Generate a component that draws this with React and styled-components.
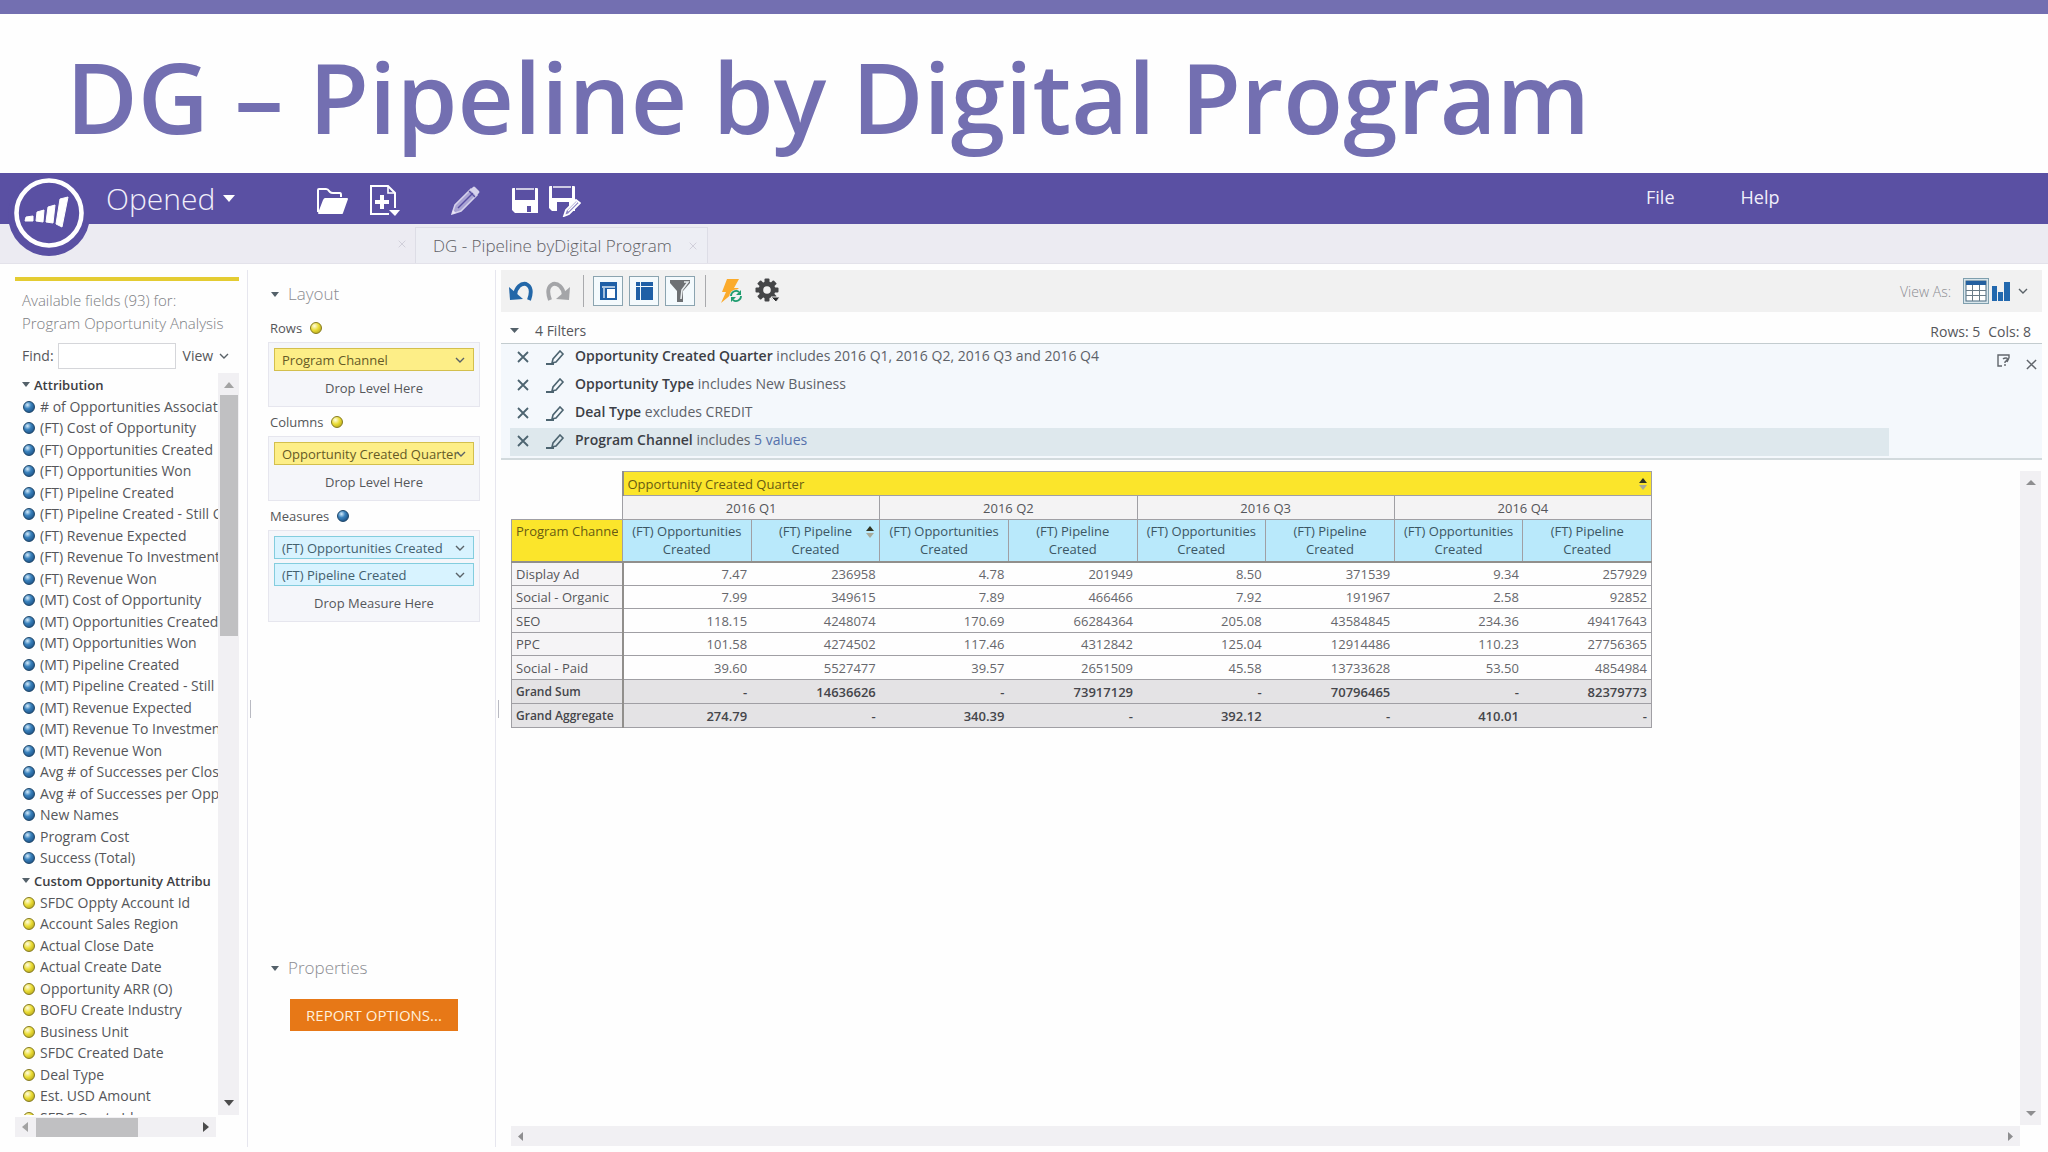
import React from 'react';
import styled, { createGlobalStyle, css } from 'styled-components';

const GlobalStyle = createGlobalStyle`
  *, *::before, *::after { box-sizing: border-box; }
  body {
    margin: 0;
    background: #fefefe;
    color: #55565a;
    font-family: "Open Sans", "Noto Sans", sans-serif;
    font-size: 14px;
  }
  button, input { font: inherit; color: inherit; }
  button { cursor: pointer; }
  ul { list-style: none; margin: 0; padding: 0; }
  h1, h2, h3, p { margin: 0; }
  svg { display: block; flex: none; }
`;

const Page = styled.div`
  display: flex;
  flex-direction: column;
  height: 100vh;
  overflow: hidden;
`;

const SlideTitle = styled.h1`
  flex: none;
  padding: 5px 66px 0;
  border-top: 14px solid #736fb1;
  color: #736fb1;
  font-size: 98px;
  font-weight: 600;
  line-height: 154px;
  white-space: nowrap;
`;

const plainButton = css`
  display: flex;
  align-items: center;
  justify-content: center;
  padding: 0;
  border: 0;
  background: none;
`;

const IconButton = styled.button`
  ${plainButton}
`;

/* ---------- header ---------- */

const Header = styled.header`
  position: relative;
  flex: none;
  display: flex;
  align-items: center;
  height: 51px;
  padding-left: 106px;
  background: #5a50a3;
  color: #f1effa;
`;

const Logo = styled.svg`
  position: absolute;
  left: 8px;
  top: 1px;
`;

const OpenedMenu = styled.button`
  ${plainButton}
  gap: 8px;
  width: 130px;
  justify-content: flex-start;
  font-size: 30px;
  font-weight: 300;
  line-height: 40px;
`;

const HeaderTools = styled.div`
  flex: 1;
  display: flex;
  align-items: center;
  padding: 4px 0 0 80px;
`;

const ToolSlot = styled(IconButton)`
  width: ${(p) => p.$width}px;
  height: 36px;
  justify-content: flex-start;
`;

const HeaderNav = styled.nav`
  display: flex;
  gap: 66px;
  width: 402px;
  padding-bottom: 4px;
`;

const NavLink = styled.a`
  color: inherit;
  font-size: 18px;
  line-height: 24px;
  text-decoration: none;
`;

/* ---------- tabs ---------- */

const TabStrip = styled.nav`
  flex: none;
  display: flex;
  justify-content: flex-start;
  height: 40px;
  padding-left: 398px;
  background: #ecebf2;
  border-bottom: 1px solid #e3e2ea;
`;

const TabClose = styled(IconButton)`
  color: #cfced8;
`;

const Tab = styled.div`
  display: flex;
  align-items: center;
  gap: 17px;
  margin: 3px 0 0 9px;
  padding: 0 10px 0 17px;
  background: #edeef4;
  border: 1px solid #dddde6;
  border-bottom: 0;
`;

const TabLink = styled.a`
  color: #5f6065;
  font-size: 17px;
  font-weight: 300;
  line-height: 24px;
  text-decoration: none;
  white-space: nowrap;
`;

/* ---------- panels ---------- */

const Workspace = styled.main`
  flex: 1;
  min-height: 0;
  display: flex;
  padding: 6px 6px 5px 3px;
`;

const FieldsPanel = styled.section`
  flex: none;
  display: flex;
  flex-direction: column;
  width: 245px;
  padding: 7px 8px 10px 12px;
  border-right: 1px solid #e6e6ee;
`;

const PanelIntro = styled.h2`
  padding: 8px 0 0 7px;
  border-top: 4px solid #e4cc32;
  color: #7c7d82;
  font-size: 15px;
  font-weight: 300;
  line-height: 23px;
  white-space: nowrap;
`;

const FindRow = styled.div`
  display: flex;
  align-items: center;
  gap: 4px;
  height: 26px;
  margin-top: 8px;
  padding-left: 7px;
  line-height: 20px;
`;

const FindInput = styled.input`
  width: 118px;
  height: 26px;
  border: 1px solid #d5d6da;
  background: #fff;
`;

const ViewButton = styled.button`
  ${plainButton}
  gap: 6px;
  margin-left: 3px;
`;

const ListFrame = styled.div`
  flex: 1;
  min-height: 0;
  display: flex;
  margin-top: 4px;
`;

const FieldList = styled.div`
  flex: 1;
  min-width: 0;
  overflow: hidden;
  padding-left: 6px;
  white-space: nowrap;
`;

const GroupTitle = styled.h3`
  display: flex;
  align-items: center;
  gap: 4px;
  height: 23px;
  padding-left: 1px;
  color: #3c3d42;
  font-size: 13px;
  font-weight: 600;
  line-height: 20px;
`;

const FieldItem = styled.li`
  display: flex;
  align-items: center;
  gap: 5px;
  height: 21px;
  padding-left: 2px;
  font-size: 14px;
  line-height: 20px;
  &:nth-child(even) { height: 22px; }
`;

const Ball = styled.span`
  flex: none;
  width: 12px;
  height: 12px;
  border-radius: 50%;
  border: 1px solid ${(p) => (p.$kind === 'measure' ? '#1c4569' : '#857a1c')};
  background: ${(p) => (p.$kind === 'measure'
    ? 'radial-gradient(circle at 35% 30%, #d4ebfb 0, #3a82bd 38%, #123f70 100%)'
    : 'radial-gradient(circle at 35% 30%, #fffde0 0, #eadc34 45%, #a3941a 100%)')};
`;

/* ---------- scrollbars ---------- */

const Bar = styled.div`
  flex: none;
  display: flex;
  flex-direction: ${(p) => (p.$vertical ? 'column' : 'row')};
  justify-content: space-between;
  align-items: center;
  ${(p) => (p.$vertical ? 'width: 21px; padding: 9px 0;' : 'height: 20px; padding: 0 7px;')}
  background: #f1f0f3;
`;

const FieldsBottomBar = styled(Bar)`
  width: 201px;
  margin-top: 2px;
`;

const Thumb = styled.div`
  ${(p) => (p.$vertical ? 'width: 18px; height: 241px; margin: 7px 0 auto;' : 'width: 102px; height: 19px; margin: 0 auto 0 8px;')}
  background: #c0c0c2;
`;

/* ---------- layout panel ---------- */

const LayoutPanel = styled.section`
  flex: none;
  display: flex;
  flex-direction: column;
  width: 248px;
  padding: 11px 15px 0 20px;
  border-right: 1px solid #e6e6ee;
`;

const SectionTitle = styled.h2`
  display: flex;
  align-items: center;
  gap: 9px;
  padding-left: 3px;
  color: #8b8c91;
  font-size: 17px;
  font-weight: 300;
  line-height: 26px;
`;

const ZoneLabel = styled.h3`
  display: flex;
  align-items: center;
  gap: 8px;
  height: 29px;
  padding-left: 2px;
  font-size: 13px;
  font-weight: 400;
`;

const ZoneLabels = styled.div`
  padding-top: 6px;
`;

const DropZone = styled.div`
  display: flex;
  flex-direction: column;
  gap: 4px;
  padding: 5px;
  border: 1px solid #e6e6ee;
  background: #f5f6fa;
`;

const Chip = styled.button`
  display: flex;
  align-items: center;
  justify-content: space-between;
  height: 23px;
  padding: 0 8px 0 7px;
  border: 1px solid ${(p) => (p.$kind === 'measure' ? '#83cdde' : '#d3bf4d')};
  background: ${(p) => (p.$kind === 'measure' ? '#d8f3ff' : '#fdee87')};
  color: ${(p) => (p.$kind === 'measure' ? '#43606e' : '#655a26')};
  font-size: 13px;
  line-height: 20px;
  white-space: nowrap;
`;

const ChipText = styled.span`
  width: 174px;
  overflow: visible;
  text-align: left;
`;

const DropHint = styled.p`
  padding: 3px 0;
  font-size: 13px;
  line-height: 20px;
  text-align: center;
`;

const PropertiesBlock = styled.div`
  display: flex;
  flex-direction: column;
  align-items: stretch;
  margin-top: auto;
  padding-bottom: 116px;
`;

const OptionsButton = styled.button`
  align-self: center;
  height: 32px;
  margin-top: 18px;
  padding: 0 16px;
  border: 0;
  background: #e77817;
  color: #fff0dc;
  font-size: 15px;
  line-height: 20px;
  white-space: nowrap;
`;

const Grip = styled.div`
  flex: none;
  align-self: center;
  width: 3px;
  height: 18px;
  margin-right: ${(p) => (p.$overlap ? -3 : 2)}px;
  border-right: 1px solid #b9bac2;
`;

/* ---------- report ---------- */

const ReportPanel = styled.section`
  flex: 1;
  min-width: 0;
  display: flex;
  flex-direction: column;
`;

const Toolbar = styled.div`
  flex: none;
  display: flex;
  align-items: center;
  height: 42px;
  padding: 0 14px 0 8px;
  background: #f1f1f1;
`;

const ToolGroup = styled.div`
  display: flex;
  align-items: center;
  gap: ${(p) => p.$gap}px;
`;

const Separator = styled.span`
  width: 1px;
  height: 32px;
  margin: 0 ${(p) => p.$right}px 0 ${(p) => p.$left}px;
  background: #a9aaad;
`;

const ToggleButton = styled.button`
  ${plainButton}
  width: 30px;
  height: 30px;
  border: 1px solid #8ba4b0;
  background: #f4fafd;
`;

const ViewAs = styled.div`
  display: flex;
  align-items: center;
  margin-left: auto;
  color: #8b8c91;
  font-size: 14px;
  font-weight: 300;
`;

const ViewAsButton = styled(IconButton)`
  height: 26px;
  margin-left: ${(p) => p.$left}px;
`;

const FilterSummary = styled.div`
  flex: none;
  display: flex;
  align-items: center;
  justify-content: space-between;
  height: 31px;
  padding: 6px 11px 0 9px;
  font-size: 14px;
  line-height: 20px;
`;

const SummaryToggle = styled.button`
  ${plainButton}
  gap: 16px;
  font-size: 14px;
`;

const Totals = styled.p`
  display: flex;
  gap: 8px;
  padding-top: 2px;
`;

const FilterPanel = styled.div`
  flex: none;
  display: flex;
  justify-content: space-between;
  padding-left: 9px;
  border-top: 1px solid #c3cccf;
  border-bottom: 2px solid #d2dadd;
  background: #f4f8fc;
`;

const FilterRows = styled.ul`
  flex: none;
  width: 90%;
  padding-bottom: 2px;
`;

const FilterRow = styled.li`
  display: flex;
  align-items: center;
  height: 28px;
  padding: 0 0 2px 7px;
  background: ${(p) => (p.$active ? '#dee8ed' : 'transparent')};
  color: #5d6168;
  font-size: 14px;
  line-height: 20px;
  white-space: nowrap;
`;

const RowButton = styled(IconButton)`
  width: ${(p) => p.$width}px;
  justify-content: flex-start;
  color: #4d6470;
`;

const FilterText = styled.p`
  padding-bottom: 3px;
  b { color: #3c3f46; font-weight: 600; }
  a { color: #5571ab; text-decoration: none; }
`;

const PanelActions = styled.div`
  align-self: flex-start;
  display: flex;
  align-items: flex-end;
  gap: 16px;
  padding: 10px 5px 0 0;
  color: #61666c;
`;

const HelpButton = styled(IconButton)`
  padding-bottom: 3px;
`;

const ReportArea = styled.div`
  flex: 1;
  min-height: 0;
  display: flex;
  padding: 11px 1px 1px 10px;
`;

const ReportBody = styled.div`
  flex: 1;
  display: flex;
  flex-direction: column;
  justify-content: space-between;
  min-width: 0;
  gap: 2px;
`;

const ReportSideBar = styled(Bar)`
  margin-bottom: 21px;
`;

const Grid = styled.table`
  width: 1141px;
  table-layout: fixed;
  border-collapse: collapse;
  font-size: 13px;
  line-height: 18px;
  white-space: nowrap;
`;

const LabelCol = styled.col`
  width: 111px;
`;

const Tr = styled.tr`
  height: ${(p) => p.$height}px;
`;

const cell = css`
  padding: 0 4px;
  border: 1px solid #a09fa4;
`;

const Corner = styled.td`
  padding: 0;
`;

const DimHead = styled.th`
  ${cell}
  border-left: 2px solid #918f8c;
  background: #fbe52b;
  color: #685b12;
  font-weight: 400;
  text-align: left;
`;

const HeadFlex = styled.div`
  display: flex;
  align-items: center;
  justify-content: space-between;
`;

const RowDimHead = styled.th`
  ${cell}
  border-bottom: 2px solid #918f8c;
  background: #fbe52b;
  color: #685b12;
  font-weight: 400;
  text-align: left;
  vertical-align: top;
`;

const Clip = styled.div`
  padding-top: 2px;
  overflow: hidden;
`;

const QuarterHead = styled.th`
  ${cell}
  background: #f4f3f4;
  font-weight: 400;
`;

const MeasureHead = styled.th`
  ${cell}
  position: relative;
  border-bottom: 2px solid #918f8c;
  background: #b9e9fb;
  color: #3c5663;
  font-weight: 400;
`;

const SortMark = styled.span`
  position: absolute;
  top: 6px;
  right: 5px;
`;

const RowHead = styled.th`
  ${cell}
  border-right: 2px solid #918f8c;
  background: ${(p) => (p.$total ? '#e4e3e5' : '#f5f4f6')};
  color: ${(p) => (p.$total ? '#45464b' : 'inherit')};
  font-size: ${(p) => (p.$total ? 12 : 13)}px;
  font-weight: ${(p) => (p.$total ? 600 : 400)};
  text-align: left;
  padding-right: 0;
`;

const Value = styled.td`
  ${cell}
  border-left: 0;
  border-right: 0;
  background: ${(p) => (p.$total ? '#e4e3e5' : '#fefefe')};
  color: ${(p) => (p.$total ? '#45464b' : '#66676c')};
  font-weight: ${(p) => (p.$total ? 600 : 400)};
  text-align: right;
  &:last-child { border-right: 1px solid #a09fa4; }
`;

/* ---------- icons ---------- */

const Triangle = ({ dir = 'down', w = 10, h = 5, color = '#54616a' }) => {
  const points = {
    down: `0,0 ${w},0 ${w / 2},${h}`,
    up: `0,${h} ${w},${h} ${w / 2},0`,
    left: `${w},0 ${w},${h} 0,${h / 2}`,
    right: `0,0 0,${h} ${w},${h / 2}`,
  }[dir];
  return <svg width={w} height={h} aria-hidden="true"><polygon points={points} fill={color} /></svg>;
};

const Chevron = ({ w = 10, color = '#5a6268' }) => (
  <svg width={w} height="6" viewBox="0 0 10 6" preserveAspectRatio="none" aria-hidden="true">
    <path d="M1 1l4 4 4-4" fill="none" stroke={color} strokeWidth="1.4" />
  </svg>
);

const Cross = ({ size = 12, width = 1.8 }) => (
  <svg width={size} height={size} viewBox="0 0 12 12" aria-hidden="true">
    <path d="M1 1l10 10M11 1L1 11" fill="none" stroke="currentColor" strokeWidth={width} />
  </svg>
);

const SortIcon = () => (
  <svg width="8" height="12" viewBox="0 0 8 12" aria-hidden="true">
    <path d="M0 5l4-5 4 5z" fill="#2f3322" />
    <path d="M0 7h8l-4 5z" fill="#a8aa9a" />
  </svg>
);

const FolderIcon = () => (
  <svg width="32" height="28" viewBox="0 0 32 28" aria-hidden="true">
    <path d="M2 25V3q0-1 1-1h7q2 0 3 2l1 1q1 1 3 1h7q1 0 1 2v2" fill="none" stroke="#fff" strokeWidth="2" />
    <path d="M9 11h22q1 0 1 1l-5 14q0 1-1 1H3q-1 0-1-1l5-13q1-2 2-2z" fill="#fff" />
  </svg>
);

const NewIcon = () => (
  <svg width="32" height="33" viewBox="0 0 32 33" aria-hidden="true">
    <path d="M20 30H2V2h17l7 7v15" fill="none" stroke="#fff" strokeWidth="2" />
    <path d="M19 2v7h7" fill="none" stroke="#fff" strokeWidth="1.6" />
    <path d="M11 11h4v5h5v4h-5v5h-4v-5H6v-4h5z" fill="#fff" />
    <path d="M20 26h11l-5 6z" fill="#fff" />
  </svg>
);

const PencilIcon = () => (
  <svg width="29" height="29" viewBox="0 0 29 29" aria-hidden="true">
    <path d="M1 28l3-9L20 3l6 6L10 25z" fill="#a9a3d4" stroke="#d6d2ec" strokeWidth="1.5" />
    <path d="M7 22L22 7" stroke="#5a50a3" strokeWidth="1.4" />
    <path d="M19 4l3-3q1-1 2 0l4 4q1 1 0 2l-3 3z" fill="#d6d2ec" />
    <path d="M18 5l6 6" stroke="#5a50a3" strokeWidth="1.2" />
    <path d="M1 28l1-4 3 3z" fill="#e9e6f6" />
  </svg>
);

const SaveShape = () => (
  <path d="M1 1h2v12h20V1h2q1 0 1 1v24H3l-3-3V2q0-1 1-1zm7 16v9h12v-9z" fill="#fff" fillRule="evenodd" />
);

const SaveIcon = () => (
  <svg width="27" height="28" viewBox="0 0 27 28" aria-hidden="true">
    <SaveShape />
    <path d="M4 2h18" stroke="#fff" strokeWidth="1.4" />
    <path d="M8 17h12v9H8z" fill="#fff" />
    <path d="M15 19h4v6h-4z" fill="#5a50a3" />
  </svg>
);

const SaveAsIcon = () => (
  <svg width="32" height="32" viewBox="0 0 32 32" aria-hidden="true">
    <SaveShape />
    <path d="M4 2h18" stroke="#fff" strokeWidth="1.4" />
    <path d="M15 31l2-6 10-10 4 3-11 11z" fill="#8d86c4" stroke="#fff" strokeWidth="1.8" />
    <path d="M19 26l9-9" stroke="#fff" strokeWidth="1.4" />
  </svg>
);

const TurnIcon = ({ color, flip }) => (
  <svg width="24" height="22" viewBox="0 0 24 22" aria-hidden="true">
    <g transform={flip ? 'translate(24 0) scale(-1 1)' : undefined}>
      <path d="M6 15C7 7 12 3 17 4c5 2 6 8 3 16" fill="none" stroke={color} strokeWidth="4" />
      <path d="M0 7l1 13 13-1z" fill={color} />
    </g>
  </svg>
);

const PaneIcon = () => (
  <svg width="17" height="18" viewBox="0 0 17 18" aria-hidden="true">
    <path d="M0 0h17v18H0z" fill="#1f5fa6" />
    <path d="M2 5h13M4 6v10" stroke="#dce9f5" strokeWidth="1.4" />
    <path d="M7 7h8v9H7z" fill="#fff" />
  </svg>
);

const GridPaneIcon = () => (
  <svg width="17" height="18" viewBox="0 0 17 18" aria-hidden="true">
    <path d="M0 0h4v4H0zM5 0h12v4H5zM0 5h4v13H0zM5 5h12v13H5z" fill="#1f5fa6" />
  </svg>
);

const FunnelIcon = () => (
  <svg width="22" height="24" viewBox="0 0 22 24" aria-hidden="true">
    <path d="M1 1h20v3l-7 8v11H8V12L1 4z" fill="#6d7073" />
    <path d="M15 3h4l-6 8-1 9" fill="none" stroke="#e9eef0" strokeWidth="1.6" />
  </svg>
);

const BoltIcon = () => (
  <svg width="24" height="26" viewBox="0 0 24 26" aria-hidden="true">
    <path d="M8 1h12l-5 9h5L2 25l5-11H3z" fill="#fbab2c" />
    <circle cx="17" cy="18" r="6.5" fill="#f1f1f1" />
    <path d="M12 18a5 5 0 0 1 8-4M22 18a5 5 0 0 1-8 4" fill="none" stroke="#1f9d70" strokeWidth="1.8" />
    <path d="M22 12v5h-5zM12 24v-5h5z" fill="#1f9d70" />
  </svg>
);

const GearIcon = () => (
  <svg width="26" height="26" viewBox="0 0 26 26" aria-hidden="true">
    <g fill="#454648">
      {[0, 45, 90, 135].map((a) => (
        <rect key={a} x="9.5" y="0.5" width="5" height="23" rx="1" transform={`rotate(${a} 12 12)`} />
      ))}
      <circle cx="12" cy="12" r="8.4" />
    </g>
    <circle cx="12" cy="12" r="3.8" fill="#f1f1f1" />
    <path d="M16 19h9l-4 5z" fill="#2a2b2d" stroke="#f1f1f1" strokeWidth="1" />
  </svg>
);

const TableIcon = () => (
  <svg width="26" height="26" viewBox="0 0 26 26" aria-hidden="true">
    <rect x="0.5" y="0.5" width="25" height="25" fill="#d9e6ec" stroke="#7f9fae" />
    <rect x="3" y="3" width="20" height="20" fill="#fff" stroke="#4a6a80" />
    <path d="M3 3h20v4H3z" fill="#24609f" />
    <path d="M3 12.500h20M3 17.500h20M9.500 7v16M16.500 7v16" stroke="#6a7c88" />
  </svg>
);

const ChartIcon = () => (
  <svg width="18" height="19" viewBox="0 0 18 19" aria-hidden="true">
    <path d="M0 4h5v15H0zM6 10h5v9H6zM12 0h6v19h-6z" fill="#2268ae" />
  </svg>
);

const EditIcon = () => (
  <svg width="20" height="15" viewBox="0 0 20 15" aria-hidden="true">
    <path d="M1 14h8" stroke="currentColor" strokeWidth="2" />
    <path d="M7 13l1-4 7-8 3 3-7 8z" fill="none" stroke="currentColor" strokeWidth="1.6" />
  </svg>
);

const HelpNoteIcon = () => (
  <svg width="14" height="13" viewBox="0 0 14 13" aria-hidden="true">
    <path d="M13 4V1H2v11h4" fill="none" stroke="currentColor" strokeWidth="1.4" />
    <path d="M7 5q1-1 3-1 2 0 1 2L9 8v1M9 10v2M11 8l2-4" fill="none" stroke="currentColor" strokeWidth="1.4" />
  </svg>
);

const LogoMark = () => (
  <Logo width="82" height="82" viewBox="0 0 82 82" role="img" aria-label="Marketo">
    <circle cx="41" cy="41" r="41" fill="#5a50a3" />
    <circle cx="41" cy="39" r="32.500" fill="none" stroke="#fff" strokeWidth="4.600" />
    <path d="M18 43l7-1 0 5H17zM29 38l7-2-1 12-7-1zM40 33l7-2-2 18-7-1zM52 25l8-2-6 30-6-3z" fill="#fff" stroke="#fff" strokeWidth="1" strokeLinejoin="round" />
  </Logo>
);

/* ---------- data ---------- */

const FIELD_GROUPS = [
  {
    name: 'Attribution',
    kind: 'measure',
    fields: [
      '# of Opportunities Associat', '(FT) Cost of Opportunity', '(FT) Opportunities Created',
      '(FT) Opportunities Won', '(FT) Pipeline Created', '(FT) Pipeline Created - Still O',
      '(FT) Revenue Expected', '(FT) Revenue To Investment', '(FT) Revenue Won',
      '(MT) Cost of Opportunity', '(MT) Opportunities Created', '(MT) Opportunities Won',
      '(MT) Pipeline Created', '(MT) Pipeline Created - Still', '(MT) Revenue Expected',
      '(MT) Revenue To Investmen', '(MT) Revenue Won', 'Avg # of Successes per Clos',
      'Avg # of Successes per Opp', 'New Names', 'Program Cost', 'Success (Total)',
    ],
  },
  {
    name: 'Custom Opportunity Attribu',
    kind: 'level',
    fields: [
      'SFDC Oppty Account Id', 'Account Sales Region', 'Actual Close Date', 'Actual Create Date',
      'Opportunity ARR (O)', 'BOFU Create Industry', 'Business Unit', 'SFDC Created Date',
      'Deal Type', 'Est. USD Amount', 'SFDC Oppty Id',
    ],
  },
];

const ZONES = [
  { name: 'Rows', kind: 'level', items: ['Program Channel'], hint: 'Drop Level Here' },
  { name: 'Columns', kind: 'level', items: ['Opportunity Created Quarter'], hint: 'Drop Level Here' },
  { name: 'Measures', kind: 'measure', items: ['(FT) Opportunities Created', '(FT) Pipeline Created'], hint: 'Drop Measure Here' },
];

const FILTERS = [
  { field: 'Opportunity Created Quarter', rule: 'includes 2016 Q1, 2016 Q2, 2016 Q3 and 2016 Q4' },
  { field: 'Opportunity Type', rule: 'includes New Business' },
  { field: 'Deal Type', rule: 'excludes CREDIT' },
  { field: 'Program Channel', rule: 'includes', link: '5 values', active: true },
];

const QUARTERS = ['2016 Q1', '2016 Q2', '2016 Q3', '2016 Q4'];

const ROWS = [
  ['Display Ad', '7.47', '236958', '4.78', '201949', '8.50', '371539', '9.34', '257929'],
  ['Social - Organic', '7.99', '349615', '7.89', '466466', '7.92', '191967', '2.58', '92852'],
  ['SEO', '118.15', '4248074', '170.69', '66284364', '205.08', '43584845', '234.36', '49417643'],
  ['PPC', '101.58', '4274502', '117.46', '4312842', '125.04', '12914486', '110.23', '27756365'],
  ['Social - Paid', '39.60', '5527477', '39.57', '2651509', '45.58', '13733628', '53.50', '4854984'],
];

const TOTALS = [
  ['Grand Sum', '-', '14636626', '-', '73917129', '-', '70796465', '-', '82379773'],
  ['Grand Aggregate', '274.79', '-', '340.39', '-', '392.12', '-', '410.01', '-'],
];

/* ---------- parts ---------- */

function AppHeader() {
  return (
    <Header>
      <LogoMark />
      <OpenedMenu>Opened <Triangle w={12} h={7} color="#fff" /></OpenedMenu>
      <HeaderTools>
        <ToolSlot $width={53} aria-label="Open"><FolderIcon /></ToolSlot>
        <ToolSlot $width={82} aria-label="New"><NewIcon /></ToolSlot>
        <ToolSlot $width={61} aria-label="Edit"><PencilIcon /></ToolSlot>
        <ToolSlot $width={37} aria-label="Save"><SaveIcon /></ToolSlot>
        <ToolSlot $width={37} aria-label="Save as"><SaveAsIcon /></ToolSlot>
      </HeaderTools>
      <HeaderNav>
        <NavLink href="#file">File</NavLink>
        <NavLink href="#help">Help</NavLink>
      </HeaderNav>
    </Header>
  );
}

function Fields() {
  return (
    <FieldsPanel>
      <PanelIntro>Available fields (93) for:<br />Program Opportunity Analysis</PanelIntro>
      <FindRow>
        <label htmlFor="find">Find:</label>
        <FindInput id="find" type="text" />
        <ViewButton>View <Chevron /></ViewButton>
      </FindRow>
      <ListFrame>
        <FieldList>
          {FIELD_GROUPS.map((group) => (
            <React.Fragment key={group.name}>
              <GroupTitle><Triangle w={8} h={5} />{group.name}</GroupTitle>
              <ul>
                {group.fields.map((name) => (
                  <FieldItem key={name}><Ball $kind={group.kind} />{name}</FieldItem>
                ))}
              </ul>
            </React.Fragment>
          ))}
        </FieldList>
        <Bar $vertical aria-hidden="true">
          <Triangle dir="up" h={6} color="#a3a3a3" />
          <Thumb $vertical />
          <Triangle h={6} color="#4c4c4c" />
        </Bar>
      </ListFrame>
      <FieldsBottomBar aria-hidden="true">
        <Triangle dir="left" w={6} h={10} color="#a3a3a3" />
        <Thumb />
        <Triangle dir="right" w={6} h={10} color="#4c4c4c" />
      </FieldsBottomBar>
    </FieldsPanel>
  );
}

function LayoutSide() {
  return (
    <LayoutPanel>
      <SectionTitle><Triangle w={8} />Layout</SectionTitle>
      <ZoneLabels>
        {ZONES.map((zone) => (
          <React.Fragment key={zone.name}>
            <ZoneLabel>{zone.name} <Ball $kind={zone.kind} /></ZoneLabel>
            <DropZone>
              {zone.items.map((item) => (
                <Chip key={item} $kind={zone.kind}><ChipText>{item}</ChipText><Chevron /></Chip>
              ))}
              <DropHint>{zone.hint}</DropHint>
            </DropZone>
          </React.Fragment>
        ))}
      </ZoneLabels>
      <PropertiesBlock>
        <SectionTitle><Triangle w={8} />Properties</SectionTitle>
        <OptionsButton>REPORT OPTIONS...</OptionsButton>
      </PropertiesBlock>
    </LayoutPanel>
  );
}

function ReportToolbar() {
  return (
    <Toolbar>
      <ToolGroup $gap={13}>
        <IconButton aria-label="Undo"><TurnIcon color="#2367a8" /></IconButton>
        <IconButton aria-label="Redo"><TurnIcon color="#a4a5a8" flip /></IconButton>
      </ToolGroup>
      <Separator $left={13} $right={9} />
      <ToolGroup $gap={6}>
        <ToggleButton aria-label="Field list"><PaneIcon /></ToggleButton>
        <ToggleButton aria-label="Layout"><GridPaneIcon /></ToggleButton>
        <ToggleButton aria-label="Filters"><FunnelIcon /></ToggleButton>
      </ToolGroup>
      <Separator $left={10} $right={13} />
      <ToolGroup $gap={12}>
        <IconButton aria-label="Auto refresh"><BoltIcon /></IconButton>
        <IconButton aria-label="Settings"><GearIcon /></IconButton>
      </ToolGroup>
      <ViewAs>
        View As:
        <ViewAsButton $left={12} aria-label="Table"><TableIcon /></ViewAsButton>
        <ViewAsButton $left={3} aria-label="Chart"><ChartIcon /></ViewAsButton>
        <ViewAsButton $left={8} aria-label="Chart types"><Chevron /></ViewAsButton>
      </ViewAs>
    </Toolbar>
  );
}

function Filters() {
  return (
    <>
      <FilterSummary>
        <SummaryToggle><Triangle w={9} />4 Filters</SummaryToggle>
        <Totals><span>Rows: 5</span><span>Cols: 8</span></Totals>
      </FilterSummary>
      <FilterPanel>
        <FilterRows>
          {FILTERS.map((f) => (
            <FilterRow key={f.field} $active={f.active}>
              <RowButton $width={28} aria-label="Remove filter"><Cross /></RowButton>
              <RowButton $width={30} aria-label="Edit filter"><EditIcon /></RowButton>
              <FilterText><b>{f.field}</b> {f.rule}{f.link && <> <a href="#values">{f.link}</a></>}</FilterText>
            </FilterRow>
          ))}
        </FilterRows>
        <PanelActions>
          <HelpButton aria-label="Help"><HelpNoteIcon /></HelpButton>
          <IconButton aria-label="Close"><Cross size={11} width={1.6} /></IconButton>
        </PanelActions>
      </FilterPanel>
    </>
  );
}

function ReportGrid() {
  return (
    <Grid>
      <colgroup>
        <LabelCol />
        {QUARTERS.map((q) => <React.Fragment key={q}><col /><col /></React.Fragment>)}
      </colgroup>
      <thead>
        <Tr $height={24}>
          <Corner rowSpan={2} />
          <DimHead colSpan={8}><HeadFlex>Opportunity Created Quarter <SortIcon /></HeadFlex></DimHead>
        </Tr>
        <Tr $height={24}>
          {QUARTERS.map((q) => <QuarterHead key={q} colSpan={2}>{q}</QuarterHead>)}
        </Tr>
        <Tr $height={42}>
          <RowDimHead><Clip>Program Channe</Clip></RowDimHead>
          {QUARTERS.map((q, i) => (
            <React.Fragment key={q}>
              <MeasureHead>(FT) Opportunities<br />Created</MeasureHead>
              <MeasureHead>
                (FT) Pipeline<br />Created
                {i === 0 && <SortMark><SortIcon /></SortMark>}
              </MeasureHead>
            </React.Fragment>
          ))}
        </Tr>
      </thead>
      <tbody>
        {ROWS.map(([name, ...values], r) => (
          <Tr key={name} $height={r % 2 ? 23 : 24}>
            <RowHead>{name}</RowHead>
            {values.map((v, i) => <Value key={i}>{v}</Value>)}
          </Tr>
        ))}
        {TOTALS.map(([name, ...values]) => (
          <Tr key={name} $height={24}>
            <RowHead $total>{name}</RowHead>
            {values.map((v, i) => <Value key={i} $total>{v}</Value>)}
          </Tr>
        ))}
      </tbody>
    </Grid>
  );
}

export default function App() {
  return (
    <Page>
      <GlobalStyle />
      <SlideTitle>DG – Pipeline by Digital Program</SlideTitle>
      <AppHeader />
      <TabStrip>
        <TabClose aria-label="Close first tab"><Cross size={8} width={1.4} /></TabClose>
        <Tab>
          <TabLink href="#report">DG - Pipeline byDigital Program</TabLink>
          <TabClose aria-label="Close tab"><Cross size={8} width={1.4} /></TabClose>
        </Tab>
      </TabStrip>
      <Workspace>
        <Fields />
        <Grip $overlap />
        <LayoutSide />
        <Grip />
        <ReportPanel>
          <ReportToolbar />
          <Filters />
          <ReportArea>
            <ReportBody>
              <ReportGrid />
              <Bar aria-hidden="true">
                <Triangle dir="left" w={5} h={9} color="#8e8e90" />
                <Triangle dir="right" w={5} h={9} color="#8e8e90" />
              </Bar>
            </ReportBody>
            <ReportSideBar $vertical aria-hidden="true">
              <Triangle dir="up" color="#8e8e90" />
              <Triangle color="#8e8e90" />
            </ReportSideBar>
          </ReportArea>
        </ReportPanel>
      </Workspace>
    </Page>
  );
}
